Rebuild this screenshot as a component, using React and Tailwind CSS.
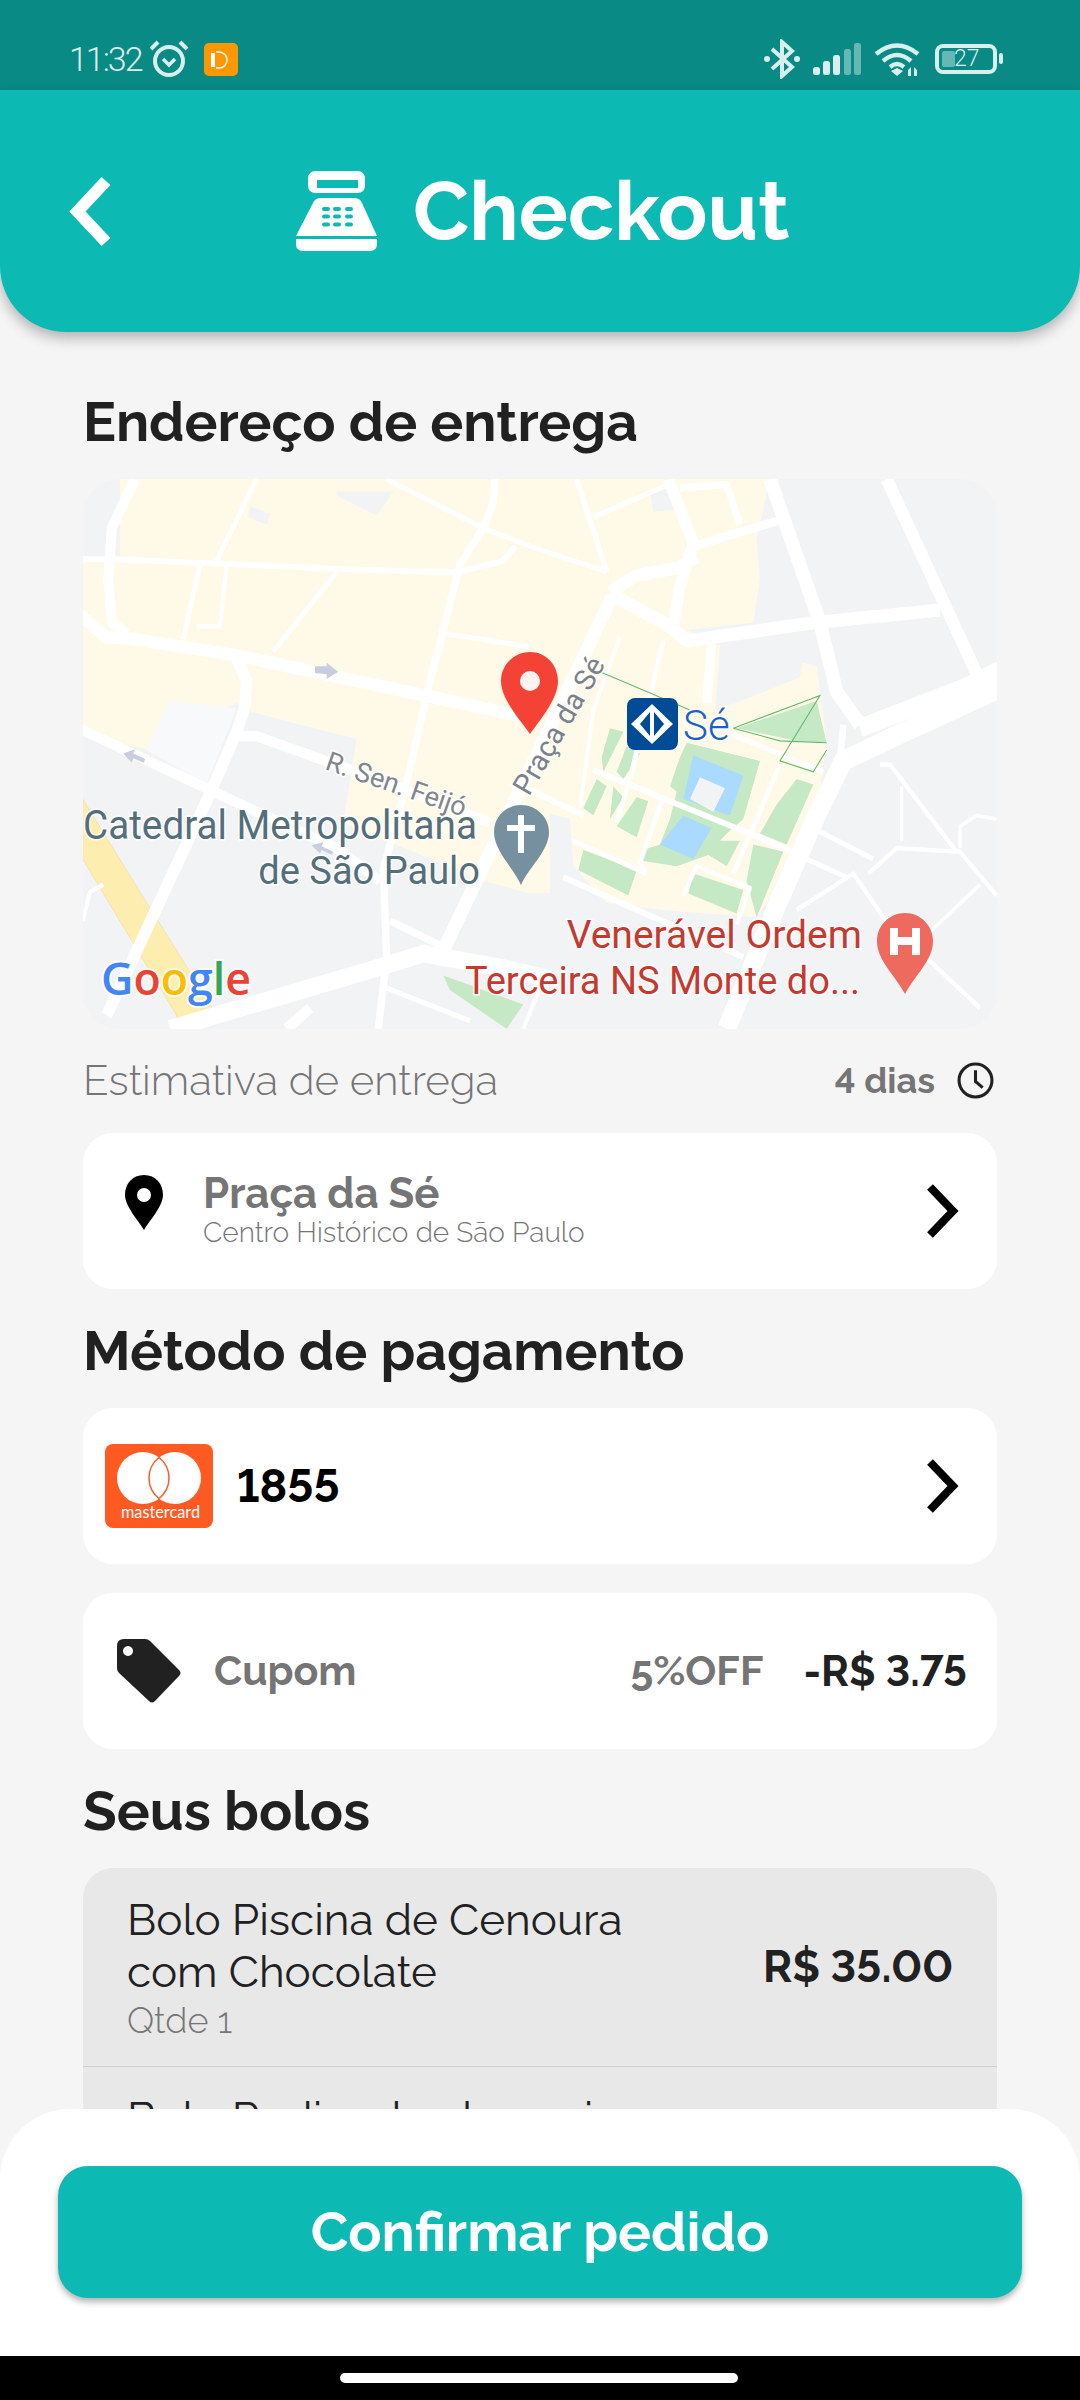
import React from "react";

const R = "font-['Raleway','Lato','Open_Sans',sans-serif]";

function Chevron({ className }) {
  return (
    <svg viewBox="0 0 33 54" className={className}>
      <path d="M4 3 L27 27 L4 51" fill="none" stroke="currentColor" strokeWidth="8" />
    </svg>
  );
}

function CashRegister() {
  return (
    <svg viewBox="0 0 81 80" className="w-[81px] h-[80px]">
      <path fillRule="evenodd" fill="#ffffff" d="M20 0 H61 Q69 0 69 8 V14 Q69 22 61 22 H20 Q12 22 12 14 V8 Q12 0 20 0 Z M21 9 V17 H62 V9 Z" />
      <path fill="#ffffff" d="M25 27 H58 Q64 27 66 32 L81 65 H0 L17 32 Q19 27 25 27 Z" />
      <g fill="#0cbab3">
        <rect x="26" y="36" width="8" height="4" rx="2" />
        <rect x="37" y="36" width="8" height="4" rx="2" />
        <rect x="49" y="36" width="8" height="4" rx="2" />
        <rect x="26" y="43.5" width="8" height="4" rx="2" />
        <rect x="37" y="43.5" width="8" height="4" rx="2" />
        <rect x="49" y="43.5" width="8" height="4" rx="2" />
        <rect x="26" y="51.5" width="8" height="4" rx="2" />
        <rect x="37" y="51.5" width="8" height="4" rx="2" />
        <rect x="49" y="51.5" width="8" height="4" rx="2" />
      </g>
      <path fill="#ffffff" d="M0 68 H81 V73 Q81 80 74 80 H7 Q0 80 0 73 Z" />
    </svg>
  );
}

function StatusBar() {
  return (
    <div className="h-[90px] bg-[#0a8a85] flex items-center justify-between pl-[69px] pr-[77px] pt-[28px] text-[#d8efed]">
      <div className="flex items-center">
        <span className="font-['Roboto',sans-serif] font-light text-[34px] tracking-[-2px] w-[72px]">11:32</span>
        <svg viewBox="0 0 40 40" className="w-[40px] h-[40px] ml-[8px]">
          <circle cx="20" cy="22" r="14" fill="none" stroke="currentColor" strokeWidth="4" />
          <path d="M14 20 l6 6 l6 -6" fill="none" stroke="currentColor" strokeWidth="3.5" />
          <path d="M2 10 L9 3 M38 10 L31 3" stroke="currentColor" strokeWidth="4" />
        </svg>
        <svg viewBox="0 0 34 33" className="w-[34px] h-[33px] ml-[15px]">
          <rect width="34" height="33" rx="5" fill="#ff9800" />
          <rect x="7" y="10" width="4" height="14" fill="#fff" />
          <path d="M12 9 H15 A8 8 0 0 1 15 25 H12" fill="none" stroke="#fff" strokeWidth="1.5" />
        </svg>
      </div>
      <div className="flex items-center">
        <svg viewBox="0 0 36 40" className="w-[36px] h-[40px]">
          <path d="M8 10 L28 28 L18 37 V3 L28 12 L8 30" fill="none" stroke="currentColor" strokeWidth="4" />
          <circle cx="3" cy="20" r="3" fill="currentColor" />
          <circle cx="33" cy="20" r="3" fill="currentColor" />
        </svg>
        <svg viewBox="0 0 48 32" className="w-[48px] h-[32px] ml-[13px]">
          <rect x="0" y="24" width="7" height="8" rx="2.5" fill="currentColor" />
          <rect x="10" y="18" width="7" height="14" rx="2.5" fill="currentColor" />
          <rect x="20" y="12" width="7" height="20" rx="2.5" fill="currentColor" />
          <rect x="31" y="6" width="7" height="26" rx="2.5" fill="currentColor" opacity="0.45" />
          <rect x="41" y="0" width="7" height="32" rx="2.5" fill="currentColor" opacity="0.45" />
        </svg>
        <svg viewBox="0 0 46 33" className="w-[46px] h-[33px] ml-[13px]">
          <path d="M2 11 Q23 -6 44 11 M9 18 Q23 6 37 18 M16 24 Q23 18 30 24" fill="none" stroke="currentColor" strokeWidth="4.5" />
          <path d="M17 28 L23 25 L29 28 L23 33 Z" fill="currentColor" />
          <path d="M34 27 L37 24 V33 H34 Z M40 24 L43 27 V33 H40 Z" fill="currentColor" />
        </svg>
        <div className="relative w-[68px] h-[30px] ml-[15px]">
          <div className="absolute left-0 top-0 w-[62px] h-[30px] border-[4px] border-[#d8efed] rounded-[8px] pl-[3px] py-[3px]">
            <div className="w-[13px] h-full bg-[#d8efed]/45 rounded-[2px]" />
          </div>
          <div className="absolute right-0 top-[9px] w-[4px] h-[11px] bg-[#d8efed] rounded-[2px]" />
          <span className="absolute left-[19px] top-0 h-[30px] font-['Roboto',sans-serif] font-light text-[23px] leading-[30px]">27</span>
        </div>
      </div>
    </div>
  );
}

function Header() {
  return (
    <div className="relative z-10 h-[242px] bg-[#0cbab3] rounded-b-[66px] shadow-[0_6px_14px_rgba(0,0,0,0.28)] flex items-center">
      <svg viewBox="0 0 41 69" className="w-[41px] h-[69px] ml-[69px] overflow-visible">
        <path d="M37 4 L8.5 34.5 L37 65" fill="none" stroke="#ffffff" strokeWidth="12" />
      </svg>
      <div className="flex items-center ml-[186px] gap-[36px]">
        <CashRegister />
        <span className={`${R} text-white font-bold text-[82px] leading-none`}>Checkout</span>
      </div>
    </div>
  );
}

function Z({ children, x = 0 }) {
  // map artwork traced in crop coordinates
  return <g transform={`translate(${x - 13},-9) scale(0.3333,0.3636)`}>{children}</g>;
}

function Road({ d, w = 14 }) {
  return <path d={d} fill="none" stroke="#ffffff" strokeWidth={w} strokeLinejoin="round" />;
}

function MapArt() {
  const halo = { paintOrder: "stroke", stroke: "#ffffff", strokeWidth: 3, strokeOpacity: 0.85 };
  return (
    <svg viewBox="0 0 914 550" className="block w-[914px] h-[550px]">
      <rect width="914" height="550" fill="#f2f3f5" />
      <Z>
        <path fill="#fff9e8" d="M150 25 H1440 V1165 L1380 1165 L1240 1130 L820 970 L860 740 L520 660 L500 640 L240 770 L38 730 V250 H150 Z" />
        <path fill="#f2f3f5" d="M800 60 L970 60 L920 125 L800 70 Z M540 100 L600 120 L590 150 L535 130 Z" />
        <path fill="#f8f9fa" d="M300 635 L500 655 L410 865 L230 770 Z" />
        <path fill="#fdeeb0" stroke="#f5dc9a" strokeWidth="2" d="M38 905 L230 1190 L435 1490 L335 1537 L320 1500 L38 1070 Z" />
        <path fill="#c5e8c5" d="M1120 1390 L1360 1470 L1310 1537 L1140 1430 Z" />
        <Road w={34} d="M20 390 L110 460 L190 465 L500 510 L1320 670 L1440 700" />
        <Road w={30} d="M195 25 L125 160 L115 300 L125 420 L170 450" />
        <Road w={16} d="M38 245 L130 245 L800 272 L1160 282 L1300 250 L1335 210" />
        <Road w={22} d="M1275 25 L1270 90 L1240 160 L1170 260 L1075 600 L1010 860 L940 1100 L950 1340 L925 1537" />
        <Road w={14} d="M950 25 L1240 160 L1440 230" />
        <Road w={14} d="M560 25 L440 250" />
        <Road w={14} d="M390 260 L340 465" />
        <Road w={12} d="M470 265 L450 430 L380 430" />
        <Road w={14} d="M800 280 L610 500" />
        <Road w={14} d="M1125 450 L1440 495" />
        <Road w={34} d="M500 520 L530 580 L525 650 L500 720 L420 890 L110 1500" />
        <Road w={28} d="M30 712 L420 880 L560 940 L800 1040 L930 1130" />
        <Road w={28} d="M500 732 L560 732 L1010 880 L1260 970" />
        <Road w={38} d="M1626 349 L1122 1317" />
        <Road w={12} d="M38 1240 L60 1160 L100 1140" />
        <Road w={48} d="M300 1537 L920 1370 L1060 1330 L1300 1370 L1440 1400" />
        <Road w={20} d="M960 1240 L1140 1320" />
        <Road w={14} d="M950 1425 L1200 1515" />
        <Road w={30} d="M720 1480 L650 1537" />
        <Road w={12} d="M1420 1400 L1360 1537" />
        <path fill="#c9cede" d="M735 540 L770 540 L770 530 L805 555 L770 575 L770 562 L735 558 Z M225 795 L190 780 L195 768 L160 780 L185 805 L190 793 L222 805 Z M790 1050 L755 1035 L760 1024 L725 1032 L750 1055 L755 1045 L785 1058 Z" />
      </Z>
      <Z x={460}>
        <path fill="#fff9e8" d="M0 25 H720 L680 190 L690 300 L670 420 L470 440 L560 480 L800 525 L860 540 L890 750 L870 880 L780 1100 L680 1230 L400 1210 L230 1190 L130 1090 L120 960 L0 930 Z" />
        <path fill="#f2f3f5" d="M360 60 L410 50 L440 110 L370 115 Z M570 485 L830 460 L810 570 L620 640 L555 660 Z" />
        <path fill="#c5e8c5" d="M470 750 L690 800 L640 960 L590 1000 L530 1060 L440 1090 L335 1075 L340 1045 L390 1030 L420 960 L440 885 L420 870 L450 790 Z" />
        <path fill="#aadaff" d="M490 785 L640 840 L600 950 L460 905 Z M460 950 L545 985 L490 1070 L390 1030 Z" />
        <path fill="#f2f3f5" d="M510 845 L585 875 L550 940 L480 905 Z" />
        <path fill="#c5e8c5" d="M160 1045 L320 1100 L295 1170 L145 1100 Z M490 1110 L640 1155 L620 1220 L475 1165 Z M800 850 L850 865 L770 1030 L690 1000 L740 920 Z M670 1030 L760 1050 L680 1230 L650 1130 Z M240 710 L280 720 L220 830 L215 790 Z M330 780 L280 850 L260 830 L290 760 Z M200 850 L160 930 L190 950 L230 870 Z M250 870 L240 960 L280 900 Z M320 900 L355 910 L320 1010 L260 980 Z M860 635 L620 710 L800 745 L890 750 Z M540 1020 L630 1020 L590 1090 L520 1050 Z" />
        <Road w={14} d="M0 210 L230 280" />
        <Road w={16} d="M140 25 L230 280" />
        <Road w={14} d="M190 130 L415 40" />
        <Road w={38} d="M246 349 L-258 1317" />
        <Road w={34} d="M240 335 L320 290 L440 270 L500 240" />
        <Road w={34} d="M415 25 L490 200 L450 320 L430 430" />
        <Road w={24} d="M490 210 L760 135" />
        <Road w={20} d="M450 50 L590 40 L630 150" />
        <Road w={36} d="M240 340 L420 430 L470 470 L850 420 L1230 385" />
        <Road w={40} d="M720 25 L870 420 L920 610 L990 700" />
        <Road w={36} d="M1070 25 L1340 560" />
        <Road w={50} d="M990 710 L1300 600 L1410 550" />
        <Road w={55} d="M1410 600 L1100 730 L940 800 L860 950 L740 1200 L590 1537" />
        <Road w={20} d="M940 700 L930 800" />
        <Road w={16} d="M0 880 L160 950" />
        <Road w={16} d="M190 825 L780 1045" />
        <Road w={28} d="M545 480 L530 640" />
        <Road w={14} d="M600 725 L880 830" />
        <Road w={14} d="M750 810 L610 1110" />
        <Road w={14} d="M400 470 L300 850 L260 970" />
        <Road w={12} d="M270 460 L190 660 L150 930" />
        <Road w={16} d="M100 1120 L640 1340" />
        <Road w={14} d="M130 1020 L350 1110" />
        <Road w={14} d="M400 900 L330 1080 L345 1110" />
        <Road w={12} d="M460 1170 L500 1090 L660 1150 L620 1250" />
        <Road w={14} d="M860 990 L1030 1070" />
        <Road w={14} d="M830 1070 L950 1120" />
        <Road w={12} d="M800 1210 L970 1110 L1060 1230 L1350 1480" />
        <Road w={12} d="M1015 1110 L1100 1040 L1290 1050 L1400 1170" />
        <Road w={12} d="M1050 810 L1080 810 L1280 1050" />
        <Road w={10} d="M1115 870 L1115 1020" />
        <Road w={10} d="M1290 1040 L1290 980 L1340 950 L1400 960" />
        <Road w={10} d="M1200 1270 L1350 1140" />
        <path fill="none" stroke="#60b96c" strokeWidth="3" d="M210 555 L480 660 M610 710 L870 620 L750 800 L850 830 L890 770 M610 710 L750 745 L890 750" />
      </Z>
      <path d="M447 173 C431 173 418 186 418 202 C418 220 437 241 447 255 C457 241 475 220 475 202 C475 186 463 173 447 173 Z" fill="#f44336" />
      <circle cx="447" cy="202" r="10" fill="#fff4f0" />
      <path fill="#76909f" d="M438 326 C423 326 411 338 411 353 C411 372 430 388 438 406 C446 388 466 372 466 353 C466 338 453 326 438 326 Z" />
      <path fill="#fff" d="M435 336 H441 V346 H452 V352 H441 V374 H435 V352 H424 V346 H435 Z" />
      <rect x="544" y="219" width="51" height="52" rx="8" fill="#004b96" />
      <path fill="#fff" fillRule="evenodd" d="M569 225 L590 245 L569 265 L548 245 Z M567 233 L557 245 L567 257 Z M571 233 V257 L581 245 Z" />
      <path fill="#ef6a5e" d="M822 434 C806 434 794 447 794 462 C794 482 813 497 822 515 C831 497 850 482 850 462 C850 447 838 434 822 434 Z" />
      <path fill="#fff" d="M807 449 H815 V458 H829 V449 H837 V476 H829 V466 H815 V476 H807 Z" />
      <g className="font-['Roboto',sans-serif]">
        <text x="0" y="360" fontSize="40" fill="#546e7a" style={halo} textLength="394" lengthAdjust="spacingAndGlyphs">Catedral Metropolitana</text>
        <text x="397" y="405" fontSize="38" fill="#546e7a" textAnchor="end" style={halo}>de São Paulo</text>
        <text x="600" y="261" fontSize="42" fontWeight="300" fill="#1a62c4" style={halo}>Sé</text>
        <text transform="translate(241,290) rotate(19)" fontSize="27" fill="#80868b" style={halo}>R. Sen. Feijó</text>
        <text transform="translate(446,318) rotate(-60)" fontSize="29" fill="#7b8288" style={halo}>Praça da Sé</text>
        <text x="779" y="469" fontSize="39" fill="#c5392f" textAnchor="end" style={halo}>Venerável Ordem</text>
        <text x="777" y="515" fontSize="38" fill="#c5392f" textAnchor="end" style={halo}>Terceira NS Monte do...</text>
        <text x="18" y="516" fontSize="46" fontWeight="600" textLength="150" lengthAdjust="spacingAndGlyphs" className="font-['Open_Sans',sans-serif]" style={{ ...halo, strokeWidth: 4 }}>
          <tspan fill="#4285f4">G</tspan><tspan fill="#ea4335">o</tspan><tspan fill="#fbbc05">o</tspan><tspan fill="#4285f4">g</tspan><tspan fill="#34a853">l</tspan><tspan fill="#ea4335">e</tspan>
        </text>
      </g>
    </svg>
  );
}

function Card({ children, className = "" }) {
  return <div className={`h-[156px] rounded-[30px] bg-white flex items-center ${className}`}>{children}</div>;
}

function Title({ children, className = "" }) {
  return <h2 className={`${R} font-bold text-[#212121] text-[55px] leading-[60px] ${className}`}>{children}</h2>;
}

export default function App() {
  return (
    <div className={`relative w-[1080px] h-[2400px] overflow-hidden bg-[#f5f5f5] lining-nums ${R}`}>
      <StatusBar />
      <Header />
      <main className="px-[83px]">
        <Title className="mt-[60px]">Endereço de entrega</Title>
        <div className="mt-[27px] h-[550px] rounded-[36px] overflow-hidden">
          <MapArt />
        </div>
        <div className="mt-[28px] h-[46px] flex items-center">
          <span className="text-[42px] font-light text-[#757575]">Estimativa de entrega</span>
          <span className="ml-auto text-[36px] font-bold text-[#757575]">4 dias</span>
          <svg viewBox="0 0 36 36" className="w-[37px] h-[37px] ml-[22px] mr-[3px] text-[#212121]">
            <circle cx="18" cy="18" r="16" fill="none" stroke="currentColor" strokeWidth="3" />
            <path d="M18 8 V19 L25 25" fill="none" stroke="currentColor" strokeWidth="3" />
          </svg>
        </div>
        <Card className="mt-[30px] pl-[41px] pr-[38px]">
          <svg viewBox="0 0 40 55" className="w-[40px] h-[55px] shrink-0 mb-[18px]">
            <path fillRule="evenodd" d="M20 0 C8 0 1 9 1 20 C1 31 14 45 20 55 C26 45 39 31 39 20 C39 9 32 0 20 0 Z M20 13 A7 7 0 1 1 20 27 A7 7 0 1 1 20 13 Z" fill="#000" />
          </svg>
          <div className="ml-[39px] flex flex-col">
            <span className="text-[42px] leading-[44px] font-bold text-[#757575]">Praça da Sé</span>
            <span className="text-[28px] leading-[34px] font-light text-[#757575]">Centro Histórico de São Paulo</span>
          </div>
          <Chevron className="ml-auto w-[33px] h-[54px] text-black" />
        </Card>
        <Title className="mt-[32px]">Método de pagamento</Title>
        <Card className="mt-[27px] pl-[22px] pr-[38px]">
          <svg viewBox="0 0 108 84" className="w-[108px] h-[84px] shrink-0">
            <rect width="108" height="84" rx="8" fill="#ff5a22" />
            <circle cx="38" cy="34" r="26" fill="#fff" />
            <circle cx="70" cy="34" r="26" fill="#fff" />
            <path d="M54 13.5 A26 26 0 0 1 54 54.5 A26 26 0 0 1 54 13.5 Z" fill="#fff" stroke="#ff5a22" strokeWidth="1.5" />
            <text x="16" y="74" fontSize="17" fill="#fff" textLength="79" lengthAdjust="spacingAndGlyphs" className="font-['Lato',sans-serif]">mastercard</text>
          </svg>
          <span className="ml-[24px] text-[46px] font-bold text-black">1855</span>
          <Chevron className="ml-auto w-[33px] h-[54px] text-black" />
        </Card>
        <Card className="mt-[29px] pl-[34px] pr-[30px]">
          <svg viewBox="0 0 65 65" className="w-[65px] h-[65px] shrink-0">
            <path fillRule="evenodd" fill="#212121" d="M7 0 H28 Q31 0 33 2 L62 31 Q65 34 62 37 L38 62 Q35 65 32 62 L2 34 Q0 32 0 29 V7 Q0 0 7 0 Z M11 7 A5 5 0 1 0 11.01 7 Z" />
          </svg>
          <span className="ml-[32px] text-[41px] font-bold text-[#757575]">Cupom</span>
          <span className="ml-auto text-[41px] font-bold text-[#757575] oldstyle-nums">5%OFF</span>
          <span className="ml-[40px] text-[42px] font-bold text-[#212121]">-R$ 3.75</span>
        </Card>
        <Title className="mt-[32px]">Seus bolos</Title>
        <div className="mt-[27px] rounded-t-[30px] bg-[#e8e8e8]">
          <div className="h-[199px] border-b border-[#cfcfcf] pl-[44px] pr-[44px] flex items-center">
            <div className="flex-1 pt-[2px]">
              <p className="text-[44px] leading-[52px] text-[#212121] w-[520px]">Bolo Piscina de Cenoura com Chocolate</p>
              <p className="text-[36px] leading-[44px] font-light text-[#757575] oldstyle-nums">Qtde 1</p>
            </div>
            <span className="text-[44px] font-bold text-[#212121]">R$ 35.00</span>
          </div>
          <div className="h-[80px] pl-[44px] pt-[25px]">
            <p className="text-[44px] leading-[52px] text-[#212121]">Bolo Pudim de abacaxi</p>
          </div>
        </div>
      </main>
      <footer className="absolute left-0 right-0 bottom-[44px] h-[247px] bg-white rounded-t-[70px] px-[58px] pt-[57px]">
        <button className="w-full h-[132px] rounded-[30px] bg-[#0cbab3] shadow-[0_4px_6px_rgba(0,0,0,0.3)] text-white font-bold text-[55px]">Confirmar pedido</button>
      </footer>
      <div className="absolute left-0 right-0 bottom-0 h-[44px] bg-black">
        <div className="absolute left-[340px] top-[17px] w-[398px] h-[10px] rounded-full bg-white" />
      </div>
    </div>
  );
}
